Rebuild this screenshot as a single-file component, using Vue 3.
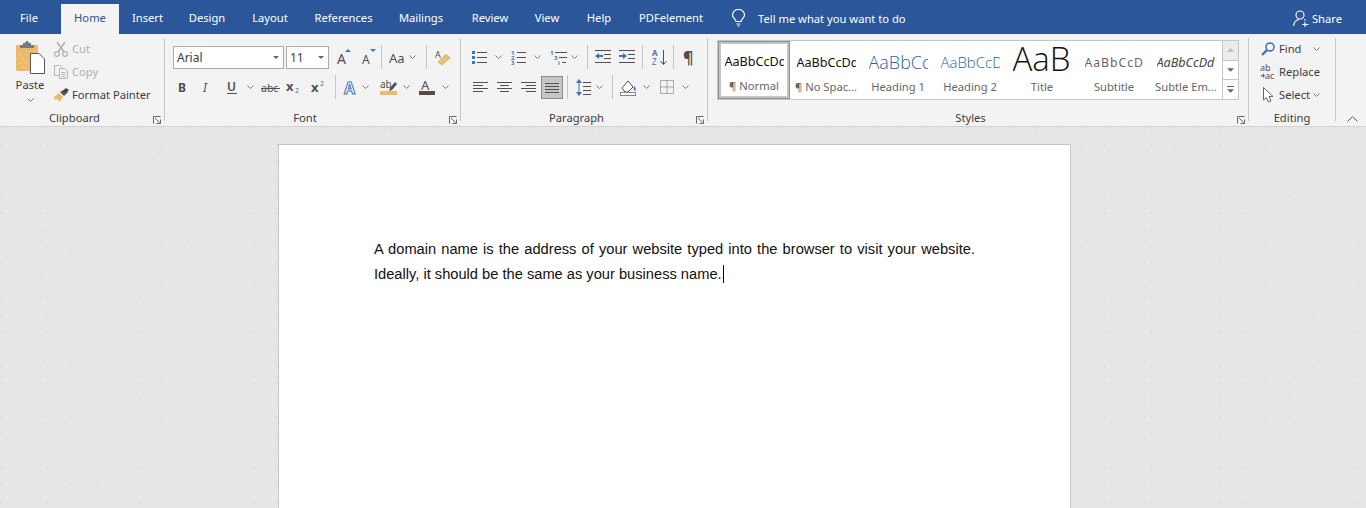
<script setup>
const tabs = [
  { label: 'File', w: 58 }, { label: 'Home', w: 58, active: true }, { label: 'Insert', w: 57 },
  { label: 'Design', w: 62 }, { label: 'Layout', w: 64 }, { label: 'References', w: 83 },
  { label: 'Mailings', w: 72 }, { label: 'Review', w: 66 }, { label: 'View', w: 48 },
  { label: 'Help', w: 56 }, { label: 'PDFelement', w: 88 }
]

const D = '#505050'
const B = '#3f74b5'
const G = '#e9bb6b'
const tx = (x, y, s, t, extra = '') => `<text x="${x}" y="${y}" font-size="${s}" font-family="'Noto Sans',sans-serif" ${extra}>${t}</text>`
const hl = (x1, x2, y, c = D) => `<path d="M${x1} ${y + 0.5}H${x2}" stroke="${c}"/>`

const ICONS = {
  chev: `<path d="M.5 .5 3.5 3.5 6.5 .5" fill="none" stroke="#777" stroke-width="1"/>`,
  sep: `<rect width="1" height="24" fill="#c6c6c6"/>`,
  bold: tx(1, 13, 12, 'B', `font-weight="700" fill="${D}"`),
  ital: tx(2, 13, 12, 'I', `font-style="italic" fill="${D}"`),
  under: tx(1, 12, 12, 'U', `fill="${D}" font-weight="600"`) + hl(1, 11, 14),
  strike: tx(0, 13, 10.5, 'abc', `fill="${D}"`) + hl(0, 19, 9),
  sub: tx(0, 12, 13, 'x', `font-weight="700" fill="${D}"`) + tx(9, 14, 7, '2', `fill="${B}"`),
  sup: tx(0, 13, 13, 'x', `font-weight="700" fill="${D}"`) + tx(9, 7, 7, '2', `fill="${B}"`),
  grow: tx(0, 15, 14, 'A', `fill="${D}"`) + `<path d="M8 3 11 0 14 3Z" fill="${B}"/>`,
  shrink: tx(0, 15, 12, 'A', `fill="${D}"`) + `<path d="M8 0H14L11 3Z" fill="${B}"/>`,
  case: tx(0, 14, 13, 'Aa', `fill="${D}"`),
  eraser: tx(0, 9, 9, 'A', `fill="${D}"`) + `<path d="M3 13 11 5 15 9 7 16Z" fill="${G}" stroke="#d9a54f" stroke-width=".6"/><path d="M6 12 7 13M9 10 10 11M11 8 12 9" stroke="#fff"/>`,
  effects: `<text x="1" y="15" font-size="16" font-weight="700" font-family="'Noto Sans',sans-serif" fill="#fff" stroke="${B}" stroke-width="1">A</text>`,
  highlight: tx(0, 9, 10, 'ab', `fill="${D}"`) + `<path d="M10 9 15 3 17 5 12 11 9 12Z" fill="${D}"/><rect y="12" width="17" height="4" fill="${G}"/>`,
  color: tx(2, 11, 13, 'A', `fill="${D}"`) + `<rect y="12" width="16" height="4" fill="#5c4a45"/>`,
  bullets: `<path d="M0 2h3v3H0zM0 7h3v3H0zM0 12h3v3H0z" fill="${B}"/>` + hl(5, 15, 3) + hl(5, 15, 8) + hl(5, 15, 13),
  number: tx(0, 6, 6, '1', `fill="${B}" font-weight="700"`) + tx(0, 11, 6, '2', `fill="${B}" font-weight="700"`) + tx(0, 16, 6, '3', `fill="${B}" font-weight="700"`) + hl(6, 15, 3) + hl(6, 15, 8) + hl(6, 15, 13),
  multi: tx(0, 6, 6, '1', `fill="${B}" font-weight="700"`) + tx(4, 11, 6, '3', `fill="${B}" font-weight="700"`) + tx(8, 16, 6, 'i', `fill="${B}" font-weight="700"`) + hl(5, 17, 3) + hl(9, 17, 8) + hl(12, 16, 13),
  outdent: hl(0, 16, 1) + hl(9, 16, 5) + hl(9, 16, 9) + hl(0, 16, 13) + `<path d="M0 7 4 4V6H8V8H4V10Z" fill="${B}"/>`,
  indent: hl(0, 16, 1) + hl(9, 16, 5) + hl(9, 16, 9) + hl(0, 16, 13) + `<path d="M8 7 4 4V6H0V8H4V10Z" fill="${B}"/>`,
  sort: tx(0, 7, 8, 'A', `fill="${B}" font-weight="700"`) + tx(0, 16, 8, 'Z', `fill="${B}"`) + `<path d="M11.5 1V15M8.5 12 11.5 15.500 14.500 12" fill="none" stroke="${D}"/>`,
  pilcrow: tx(0, 14, 16, '¶', `fill="${D}" font-weight="700"`),
  left: hl(0, 15, 1) + hl(0, 10, 4) + hl(0, 15, 7) + hl(0, 10, 10),
  center: hl(0, 15, 1) + hl(3, 12, 4) + hl(0, 15, 7) + hl(3, 12, 10),
  right: hl(0, 15, 1) + hl(5, 15, 4) + hl(0, 15, 7) + hl(5, 15, 10),
  justify: `<rect x=".5" y=".5" width="21" height="22" fill="#c6c6c6" stroke="#8a8a8a"/>` + hl(4, 18, 7) + hl(4, 18, 10) + hl(4, 18, 13) + hl(4, 18, 16),
  spacing: `<path d="M3 1V16" stroke="${B}"/><path d="M0 4 3 0 6 4ZM0 13 3 17 6 13Z" fill="${B}"/>` + hl(7, 15, 3) + hl(7, 15, 7) + hl(7, 15, 11) + hl(7, 15, 15),
  shading: `<path d="M2 9 8 2 13 8 8 13H5Z" fill="#fff" stroke="${D}"/><path d="M14 7Q17 10 15 12 13 11 14 7Z" fill="#2f6fb5"/><rect x=".5" y="13.500" width="15" height="3" fill="#fff" stroke="#888"/>`,
  borders: `<path d="M.5 .5H13.500V13.500H.5ZM7 .5V13.500M.5 7H13.500" fill="none" stroke="#666" stroke-dasharray="1 1"/>`,
  arrow: `<path d="M0 0H6L3 3Z" fill="#666"/>`
}

const place = (items, start) => {
  let pos = start
  return items.map(([left, w, icon, h = 16]) => {
    const m = left - pos
    pos = left + w
    return { w, icon, h, m }
  })
}
const ch = left => [left, 7, 'chev', 4]
const sp = left => [left, 1, 'sep', 24]

const fontRow1 = place([[337, 14, 'grow'], [362, 14, 'shrink'], sp(381), [389, 17, 'case'], ch(409), sp(426), [435, 16, 'eraser']], 329)
const fontRow2 = place([[177, 12, 'bold'], [201, 12, 'ital'], [226, 12, 'under'], ch(247), [261, 20, 'strike'], [286, 16, 'sub'], [311, 16, 'sup'], sp(335), [343, 16, 'effects'], ch(362), [380, 18, 'highlight'], ch(403), [419, 16, 'color'], ch(442)], 165)
const paraRow1 = place([[472, 16, 'bullets'], ch(495), [511, 16, 'number'], ch(534), [550, 18, 'multi'], ch(571), sp(587), [595, 16, 'outdent'], [619, 16, 'indent'], sp(642), [652, 16, 'sort'], sp(673), [683, 12, 'pilcrow']], 461)
const paraRow2 = place([[473, 15, 'left', 12], [497, 15, 'center', 12], [521, 15, 'right', 12], [541, 22, 'justify', 23], sp(567), [576, 15, 'spacing', 17], ch(596), sp(612), [620, 17, 'shading', 17], ch(643), [660, 14, 'borders', 14], ch(682)], 461)

const styles = [
  { prev: 'AaBbCcDd', label: '¶ Normal', cls: 'normal', active: true },
  { prev: 'AaBbCcDd', label: '¶ No Spac...', cls: 'normal' },
  { prev: 'AaBbCcDd', label: 'Heading 1', cls: 'h1' },
  { prev: 'AaBbCcDd', label: 'Heading 2', cls: 'h2' },
  { prev: 'AaB', label: 'Title', cls: 'title' },
  { prev: 'AaBbCcDd', label: 'Subtitle', cls: 'subtitle' },
  { prev: 'AaBbCcDd', label: 'Subtle Em...', cls: 'subtle' }
]
</script>

<template>
  <div class="app">
    <header class="tabbar">
      <div
        v-for="t in tabs"
        :key="t.label"
        class="tab"
        :class="{ active: t.active }"
        :style="{ width: t.w + 'px' }"
      >{{ t.label }}</div>
      <div class="tell">
        <svg width="15" height="18" viewBox="0 0 15 18" fill="none" stroke="#fff" stroke-width="1.2">
          <path d="M5 12.500C5 10 1.500 9 1.500 6A6 5.500 0 0 1 13.500 6C13.500 9 10 10 10 12.500ZM5.500 15H9.500M6.500 17H8.500" />
        </svg>
        <span>Tell me what you want to do</span>
      </div>
      <div class="share">
        <svg width="16" height="17" viewBox="0 0 16 17" fill="none" stroke="#fff" stroke-width="1.1">
          <circle cx="7" cy="5" r="4" />
          <path d="M.5 16C1 12 3 10 6 9.500M11 9.500C11.500 9.700 12 10 12.500 10.500M12 12V17M9.500 14.500H15.500" />
        </svg>
        <span>Share</span>
      </div>
    </header>

    <section class="ribbon">
      <div class="group clipboard">
        <div class="content clip-content">
          <div class="paste">
            <svg width="30" height="33" viewBox="0 0 30 33">
              <rect x="1" y="4" width="22" height="26" rx="1" fill="#e9bb6b" />
              <path d="M8 5V2H10L11 0H13L14 2H16V5Z" fill="#7a7a7a" />
              <rect x="5" y="4" width="14" height="3" fill="#7a7a7a" />
              <path d="M15.500 12.500H24L29.500 18V32.500H15.500Z" fill="#fff" stroke="#555" />
              <path d="M4 14H5M8 18H9M4 22H5M8 26H9M11 14H12M11 22H12" stroke="#fbeacb" />
            </svg>
            <span class="paste-label">Paste</span>
            <svg class="icon" width="7" height="4" viewBox="0 0 7 4" v-html="ICONS.chev"></svg>
          </div>
          <div class="small-col">
            <div class="small-row disabled">
              <svg width="14" height="16" viewBox="0 0 14 16" fill="none" stroke="#b4b4b4" stroke-width="1.2">
                <circle cx="3" cy="13" r="2.400" />
                <circle cx="11" cy="13" r="2.400" />
                <path d="M4 11 11 1M10 11 3 1" stroke-width="1.600" />
              </svg>
              <span>Cut</span>
            </div>
            <div class="small-row disabled">
              <svg width="14" height="14" viewBox="0 0 14 14" fill="#f3f3f3" stroke="#b4b4b4">
                <path d="M.5 .5H6.500L8.500 2.500V10.500H.5Z" />
                <path d="M5.500 3.500H11L13.500 6V13.500H5.500Z" />
                <path d="M7.500 7.500H11.500M7.500 9.500H11.500M7.500 11.500H11.500" />
              </svg>
              <span>Copy</span>
            </div>
            <div class="small-row painter">
              <svg width="15" height="14" viewBox="0 0 15 14">
                <path d="M0 9 5 5 9 9 6 14 3 11 1 12Z" fill="#e9bb6b" />
                <path d="M6 4 11 1 14 4 10 8Z" fill="#555" />
                <path d="M9 3 12 0 15 2 12 5Z" fill="#444" />
              </svg>
              <span>Format Painter</span>
            </div>
          </div>
        </div>
        <div class="label">Clipboard</div>
        <svg class="launcher" width="8" height="8" viewBox="0 0 8 8" fill="none" stroke="#666">
          <path d="M.5 7.500V.5H7.500M2 2 6.500 6.500M3.500 7.500H7.500V3.500" />
        </svg>
      </div>

      <div class="group font">
        <div class="content">
          <div class="row">
            <div class="combo name"><span>Arial</span><svg width="6" height="3" viewBox="0 0 6 3" v-html="ICONS.arrow"></svg></div>
            <div class="combo size"><span>11</span><svg width="6" height="3" viewBox="0 0 6 3" v-html="ICONS.arrow"></svg></div>
            <svg
              v-for="(t, i) in fontRow1"
              :key="i"
              class="icon"
              :width="t.w"
              :height="t.h"
              :viewBox="`0 0 ${t.w} ${t.h}`"
              :style="{ marginLeft: t.m + 'px' }"
              v-html="ICONS[t.icon]"
            ></svg>
          </div>
          <div class="row">
            <svg
              v-for="(t, i) in fontRow2"
              :key="i"
              class="icon"
              :width="t.w"
              :height="t.h"
              :viewBox="`0 0 ${t.w} ${t.h}`"
              :style="{ marginLeft: t.m + 'px' }"
              v-html="ICONS[t.icon]"
            ></svg>
          </div>
        </div>
        <div class="label">Font</div>
        <svg class="launcher" width="8" height="8" viewBox="0 0 8 8" fill="none" stroke="#666">
          <path d="M.5 7.500V.5H7.500M2 2 6.500 6.500M3.500 7.500H7.500V3.500" />
        </svg>
      </div>

      <div class="group para">
        <div class="content">
          <div class="row">
            <svg
              v-for="(t, i) in paraRow1"
              :key="i"
              class="icon"
              :width="t.w"
              :height="t.h"
              :viewBox="`0 0 ${t.w} ${t.h}`"
              :style="{ marginLeft: t.m + 'px' }"
              v-html="ICONS[t.icon]"
            ></svg>
          </div>
          <div class="row">
            <svg
              v-for="(t, i) in paraRow2"
              :key="i"
              class="icon"
              :width="t.w"
              :height="t.h"
              :viewBox="`0 0 ${t.w} ${t.h}`"
              :style="{ marginLeft: t.m + 'px' }"
              v-html="ICONS[t.icon]"
            ></svg>
          </div>
        </div>
        <div class="label">Paragraph</div>
        <svg class="launcher" width="8" height="8" viewBox="0 0 8 8" fill="none" stroke="#666">
          <path d="M.5 7.500V.5H7.500M2 2 6.500 6.500M3.500 7.500H7.500V3.500" />
        </svg>
      </div>

      <div class="group stylesgrp">
        <div class="content gallery-wrap">
          <div class="gallery">
            <div v-for="s in styles" :key="s.label" class="style" :class="{ active: s.active }">
              <div class="preview" :class="s.cls">{{ s.prev }}</div>
              <div class="style-label">{{ s.label }}</div>
            </div>
            <div class="scroll">
              <div class="sbtn dim"><svg width="7" height="4" viewBox="0 0 6 3"><path d="M0 3H6L3 0Z" fill="#bbb" /></svg></div>
              <div class="sbtn"><svg width="7" height="4" viewBox="0 0 6 3" v-html="ICONS.arrow"></svg></div>
              <div class="sbtn more">
                <i></i>
                <svg width="7" height="4" viewBox="0 0 6 3" v-html="ICONS.arrow"></svg>
              </div>
            </div>
          </div>
        </div>
        <div class="label">Styles</div>
        <svg class="launcher" width="8" height="8" viewBox="0 0 8 8" fill="none" stroke="#666">
          <path d="M.5 7.500V.5H7.500M2 2 6.500 6.500M3.500 7.500H7.500V3.500" />
        </svg>
      </div>

      <div class="group editing">
        <div class="content small-col">
          <div class="small-row">
            <svg width="14" height="14" viewBox="0 0 14 14" fill="none" stroke="#3f74b5">
              <circle cx="9" cy="5" r="4" stroke-width="1.600" />
              <path d="M6 8 1 13" stroke-width="2.400" />
            </svg>
            <span>Find</span>
            <svg class="after find-ch" width="7" height="4" viewBox="0 0 7 4" v-html="ICONS.chev"></svg>
          </div>
          <div class="small-row">
            <svg class="replace" width="17" height="16" viewBox="0 0 17 16">
              <text x="0" y="7" font-size="9" font-family="'Noto Sans',sans-serif" fill="#505050">ab</text>
              <text x="5" y="15" font-size="9" font-family="'Noto Sans',sans-serif" fill="#505050">ac</text>
              <path d="M1 11H3V9L5 12 3 14V12.500H1Z" fill="#3f74b5" />
            </svg>
            <span>Replace</span>
          </div>
          <div class="small-row">
            <svg class="cursor" width="12" height="16" viewBox="0 0 12 16" fill="#fff" stroke="#666">
              <path d="M1.500 .5V13L4.500 10.500 6.500 15 9 14 7 9.500H11Z" />
            </svg>
            <span>Select</span>
            <svg class="after" width="7" height="4" viewBox="0 0 7 4" v-html="ICONS.chev"></svg>
          </div>
        </div>
        <div class="label">Editing</div>
      </div>

      <svg class="collapse" width="11" height="6" viewBox="0 0 11 6" fill="none" stroke="#555">
        <path d="M.5 5.500 5.500 .5 10.500 5.500" />
      </svg>
    </section>

    <main class="canvas">
      <article class="page">
        <p class="line just">A domain name is the address of your website typed into the browser to visit your website.</p>
        <p class="line">Ideally, it should be the same as your business name.<span class="caret"></span></p>
      </article>
    </main>
  </div>
</template>

<style scoped>
.app {
  width: 1366px;
  height: 508px;
  overflow: hidden;
  display: flex;
  flex-direction: column;
  font-family: "Noto Sans", sans-serif;
  font-size: 11.2px;
  color: #3c3c3c;
  background: #e6e6e6;
}

.tabbar {
  height: 34px;
  flex: none;
  display: flex;
  align-items: flex-end;
  background-color: #2b579a;
  color: #fff;
  box-sizing: border-box;
}
.tab {
  height: 30px;
  line-height: 28px;
  text-align: center;
  flex: none;
}
.tab:first-child {
  margin-right: 3px;
}
.tab.active {
  background: #f3f3f3;
  color: #2b579a;
}
.tell {
  display: flex;
  align-items: center;
  gap: 12px;
  margin-left: 16px;
  height: 30px;
  padding-bottom: 2px;
  box-sizing: border-box;
}
.share {
  display: flex;
  align-items: center;
  gap: 3px;
  margin-left: auto;
  margin-right: 24px;
  height: 30px;
  padding-bottom: 2px;
  box-sizing: border-box;
}

.ribbon {
  height: 93px;
  flex: none;
  box-sizing: border-box;
  display: flex;
  padding-top: 4px;
  background: #f3f3f3;
  border-bottom: 1px solid #d2d2d2;
  position: relative;
}
.group {
  position: relative;
  height: 83px;
  flex: none;
  box-sizing: border-box;
  display: flex;
  flex-direction: column;
  border-right: 1px solid #c6c6c6;
}
.clipboard { width: 165px; }
.font { width: 296px; }
.para { width: 247px; }
.stylesgrp { width: 541px; }
.editing { width: 87px; }

.content {
  flex: 1;
  min-height: 0;
  padding-top: 7px;
  display: flex;
  flex-direction: column;
  gap: 6px;
}
.label {
  height: 16px;
  line-height: 16px;
  text-align: center;
  margin-bottom: -5px;
  padding-right: 15px;
  flex: none;
}
.editing .label {
  padding-right: 0;
}
.launcher {
  position: absolute;
  right: 3px;
  bottom: -3px;
}

.row {
  height: 24px;
  display: flex;
  align-items: center;
  flex: none;
}
.icon {
  flex: none;
  overflow: visible;
}

.clip-content {
  flex-direction: row;
  gap: 0;
  padding: 0;
}
.paste {
  width: 30px;
  margin-left: 15px;
  display: flex;
  flex-direction: column;
  align-items: center;
  padding-top: 3px;
}
.paste-label {
  margin-top: 1px;
  line-height: 20px;
}
.paste .icon {
  margin-top: 3px;
}
.small-col {
  display: flex;
  flex-direction: column;
  gap: 0;
  padding: 0;
  margin-top: -1px;
}
.clipboard .small-col {
  margin-left: 9px;
}
.editing .small-col {
  padding-left: 12px;
}
.small-row {
  height: 23px;
  display: flex;
  align-items: center;
  gap: 4px;
}
.small-row.painter {
  gap: 3px;
}
.small-row.disabled {
  color: #b1b1b1;
}
.replace { margin-left: -1px; margin-right: -2px; }
.cursor { margin: 0 1px 0 1px; }
.after { margin-left: -1px; }
.find-ch { margin-left: 7px; }

.combo {
  height: 23px;
  box-sizing: border-box;
  border: 1px solid #ababab;
  background: #fff;
  display: flex;
  align-items: center;
  justify-content: space-between;
  padding: 0 4px 0 3px;
  font-size: 12px;
  flex: none;
}
.combo.name {
  width: 111px;
  margin-left: 8px;
}
.combo.size {
  width: 43px;
  margin-left: 2px;
}

.gallery-wrap {
  padding: 2px 0 0 9px;
}
.gallery {
  width: 522px;
  height: 60px;
  box-sizing: border-box;
  border: 1px solid #c6c6c6;
  background: #fff;
  display: flex;
}
.style {
  width: 72px;
  height: 58px;
  flex: none;
  box-sizing: border-box;
  display: flex;
  flex-direction: column;
  align-items: center;
  padding: 3px 0 0;
}
.style.active {
  border: 3px solid #c4c4c4;
  outline: 1px solid #8e8e8e;
  outline-offset: -1px;
  padding-top: 0;
}
.preview {
  width: 59px;
  height: 34px;
  line-height: 37px;
  overflow: hidden;
  white-space: nowrap;
  color: #111;
  font-size: 12.6px;
  flex: none;
}
.preview.h1 {
  font-size: 18px;
  color: #2f5ea8;
  font-family: "Open Sans", sans-serif;
  font-weight: 300;
}
.preview.h2 {
  font-size: 15px;
  color: #2f5ea8;
  font-family: "Open Sans", sans-serif;
  font-weight: 300;
}
.preview.title {
  font-size: 33px;
  color: #111;
  font-weight: 300;
  height: 24px;
  line-height: 23px;
  margin: 3px 0 7px;
  font-family: "Open Sans", sans-serif;
}
.preview.subtitle {
  color: #666;
  font-size: 12.2px;
  letter-spacing: 1px;
}
.preview.subtle {
  color: #444;
  font-style: italic;
}
.style-label {
  line-height: 18px;
  color: #666;
  white-space: nowrap;
}
.style.active .preview {
  margin-top: -1px;
}
.scroll {
  width: 15px;
  margin-left: auto;
  border-left: 1px solid #c6c6c6;
  display: flex;
  flex-direction: column;
  background: #f3f3f3;
}
.sbtn {
  flex: 1;
  display: flex;
  flex-direction: column;
  align-items: center;
  justify-content: center;
  gap: 2px;
  background: #fff;
  border-bottom: 1px solid #c6c6c6;
}
.sbtn:last-child {
  border-bottom: 0;
}
.sbtn.dim {
  background: #ececec;
}
.more i {
  width: 7px;
  height: 1px;
  background: #666;
}

.collapse {
  position: absolute;
  right: 8px;
  bottom: 4px;
}

.canvas {
  flex: 1;
  min-height: 0;
  padding: 17px 0 0 278px;
  background-color: #e6e6e6;
  background-image:
    radial-gradient(circle at 1px 1px, #dcdcdc 0.6px, transparent 0.9px),
    radial-gradient(circle at 1px 1px, #eeeeee 0.6px, transparent 0.9px),
    radial-gradient(circle at 1px 1px, #dedede 0.5px, transparent 0.8px);
  background-size: 23px 17px, 19px 13px, 29px 11px;
  background-position: 0 0, 6px 5px, 13px 3px;
}
.page {
  width: 793px;
  height: 500px;
  box-sizing: border-box;
  background: #fff;
  border: 1px solid #c6c6c6;
  padding: 92px 95px 0;
  font-family: "Liberation Sans", Arial, sans-serif;
  font-size: 14.67px;
  color: #111;
}
.line {
  margin: 0;
  height: 25px;
  line-height: 25px;
  white-space: nowrap;
}
.just {
  white-space: normal;
  text-align: justify;
  text-align-last: justify;
}
.caret {
  display: inline-block;
  width: 1px;
  height: 18px;
  margin-left: 1px;
  background: #000;
  vertical-align: -4px;
}
</style>
